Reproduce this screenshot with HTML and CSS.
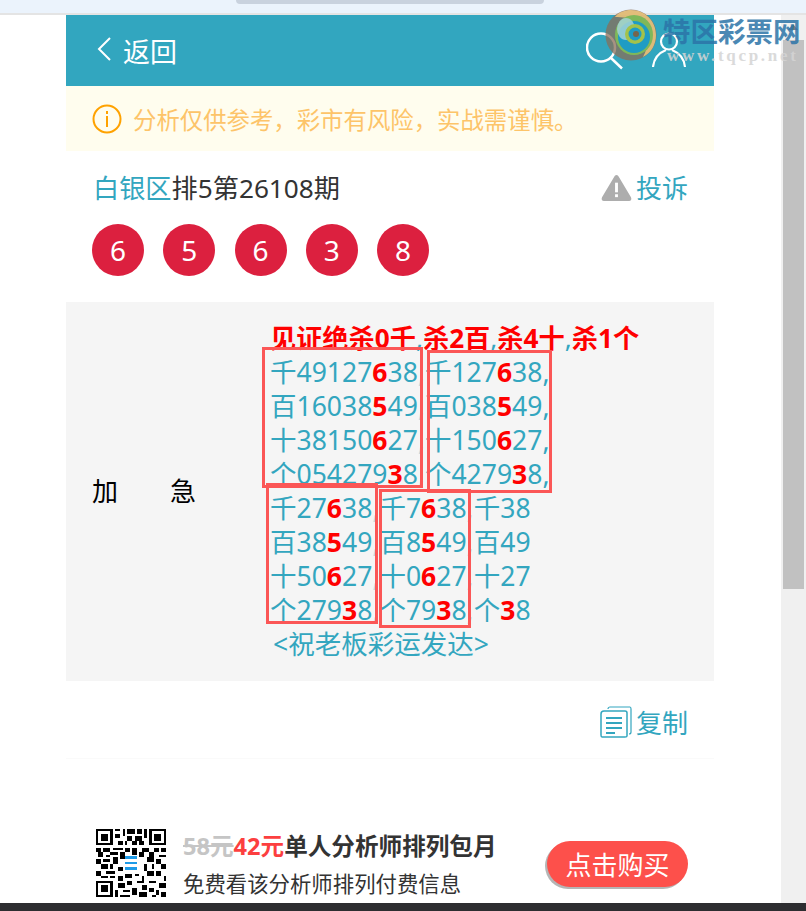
FILE: index.html
```html
<!DOCTYPE html>
<html>
<head>
  <meta charset="utf-8">
  <title>白银区排5第26108期</title>
  <link rel="stylesheet" href="styles.css">
</head>
<body>
  <div class="browser-top"><div class="tab-pill"></div></div>

  <div class="viewport">
    <div class="page">
      <div class="header">
        <a class="back">
          <svg class="back-icon" width="16" height="26" viewBox="0 0 16 26"><path d="M14 2 L3 13 L14 24" fill="none" stroke="#fff" stroke-width="2"/></svg>
          返回
        </a>
        <div class="header-icons">
          <svg width="38" height="38" viewBox="0 0 38 38"><circle cx="15" cy="15.500" r="14" fill="none" stroke="#fff" stroke-width="2.500"/><path d="M25 26 L36 36.500" stroke="#fff" stroke-width="2.500"/></svg>
          <svg width="36" height="38" viewBox="0 0 36 38"><circle cx="17" cy="9.500" r="8" fill="none" stroke="#fff" stroke-width="2.200"/><path d="M1 35 C2 25 9 20 14 18 M33 35 C32 25 25 20 20 18" fill="none" stroke="#fff" stroke-width="2.200"/></svg>
        </div>
      </div>

      <div class="notice">
        <svg width="30" height="30" viewBox="0 0 30 30"><circle cx="15" cy="15" r="13.500" fill="none" stroke="#ffa200" stroke-width="2"/><rect x="14" y="12" width="2" height="11" fill="#ffa200"/><rect x="14" y="7" width="2" height="3" fill="#ffa200"/></svg>
        <span>分析仅供参考，彩市有风险，实战需谨慎。</span>
      </div>

      <div class="title-row">
        <div class="title"><span class="teal">白银区</span>排5第26108期</div>
        <div class="complain">
          <svg width="31" height="27" viewBox="0 0 32 28"><path d="M16 1 C17 1 18 2 18.500 3 L31 24 C32 26 31 28 29 28 L3 28 C1 28 0 26 1 24 L13.500 3 C14 2 15 1 16 1 Z" fill="#adadad"/><rect x="14.500" y="9" width="3" height="10" fill="#fff"/><rect x="14.500" y="21" width="3" height="3" fill="#fff"/></svg>
          <span class="teal">投诉</span>
        </div>
      </div>

      <div class="balls">
        <span class="ball">6</span>
        <span class="ball">5</span>
        <span class="ball">6</span>
        <span class="ball">3</span>
        <span class="ball">8</span>
      </div>

      <div class="panel">
        <div class="panel-label">加<i></i>急</div>
        <div class="panel-body">
          <div class="headline">见证绝杀0千<em>,</em>杀2百<em>,</em>杀4十<em>,</em>杀1个</div>
          <div class="row">千49127<b>6</b>38<u>,</u>千127<b>6</b>38,</div>
          <div class="row">百16038<b>5</b>49<u>,</u>百038<b>5</b>49,</div>
          <div class="row">十38150<b>6</b>27<u>,</u>十150<b>6</b>27,</div>
          <div class="row">个054279<b>3</b>8<u>,</u>个4279<b>3</b>8,</div>
          <div class="row">千27<b>6</b>38<u>,</u>千7<b>6</b>38<u>,</u>千38</div>
          <div class="row">百38<b>5</b>49<u>,</u>百8<b>5</b>49<u>,</u>百49</div>
          <div class="row">十50<b>6</b>27<u>,</u>十0<b>6</b>27<u>,</u>十27</div>
          <div class="row">个279<b>3</b>8<u>,</u>个79<b>3</b>8<u>,</u>个<b>3</b>8</div>
          <div class="wish">&lt;祝老板彩运发达&gt;</div>
          <div class="mark mark-a"></div>
          <div class="mark mark-b"></div>
          <div class="mark mark-c"></div>
          <div class="mark mark-d"></div>
        </div>
      </div>

      <div class="copy-row">
        <svg width="32" height="32" viewBox="0 0 32 32"><path d="M8 3 C8 2 9 1 10 1 L30 1 C31 1 31 2 31 3 L31 26 C31 27 30 28 29 28" fill="none" stroke="#33a6bf" stroke-width="1.200"/><path d="M4 5 L25 5 C26 5 27 6 27 7 L27 30 C27 31 26 31 25 31 L2 31 C1 31 1 30 1 29 L1 8 C1 6 2 5 4 5 Z" fill="#fff" stroke="#33a6bf" stroke-width="1.500"/><path d="M6 12 H22 M6 17 H22 M6 22 H22 M6 27 H15" stroke="#33a6bf" stroke-width="2"/></svg>
        <span class="teal">复制</span>
      </div>

      <div class="buy-row">
        <svg class="qr" width="70" height="68" viewBox="0 0 29 29" preserveAspectRatio="none" shape-rendering="crispEdges"><path fill="#000" d="M0 0h7v7H0z M22 0h7v7h-7z M0 22h7v7H0z"/><path fill="#fff" d="M1 1h5v5H1z M23 1h5v5h-5z M1 23h5v5H1z"/><path fill="#000" d="M2 2h3v3H2z M24 2h3v3h-3z M2 24h3v3H2z M8 0h2v1H8z M11 0h1v3h-1z M13 0h3v2h-3z M17 0h2v2h-2z M20 0h1v4h-1z M8 2h2v2H8z M13 3h2v2h-2z M16 3h3v2h-3z M9 5h2v2H9z M12 5h1v2h-1z M15 5h2v2h-2z M18 5h2v2h-2z M0 8h2v2H0z M3 8h3v2H3z M7 8h4v1H7z M12 8h2v2h-2z M15 8h2v3h-2z M19 8h3v2h-3z M24 8h2v2h-2z M27 8h2v2h-2z M1 10h2v2H1z M4 11h2v1H4z M6 10h3v1H6z M10 10h2v3h-2z M18 10h2v2h-2z M22 10h2v2h-2z M26 11h3v1h-3z M0 13h2v2H0z M3 13h3v1H3z M7 12h2v3H7z M21 12h3v2h-3z M25 13h2v2h-2z M2 15h3v2H2z M6 15h1v2H6z M9 16h2v2H9z M20 15h1v3h-1z M23 15h1v2h-1z M27 15h2v2h-2z M0 18h2v2H0z M4 18h4v1H4z M12 19h3v2h-3z M16 19h2v1h-2z M21 18h3v2h-3z M25 18h2v2h-2z M2 20h3v1H2z M6 20h2v1H6z M9 20h2v2H9z M19 20h1v2h-1z M28 20h1v2h-1z M9 23h3v2H9z M13 22h2v2h-2z M17 22h3v1h-3z M22 22h3v1h-3z M26 23h3v2h-3z M8 26h1v3H8z M11 26h3v1h-3z M15 25h2v3h-2z M19 24h2v2h-2z M22 25h2v2h-2z M25 26h1v2h-1z M10 28h4v1h-4z M18 27h3v2h-3z M23 28h2v1h-2z M27 27h2v2h-2z"/><path fill="#fff" d="M12 11h5v7h-5z"/><path fill="#1e9be8" d="M12 11.500h5v1.500h-5z M12 14h5v1h-5z M12 16h5v1.500h-5z"/></svg>
        <div class="buy-text">
          <div class="buy-title"><s>58元</s><span class="price">42元</span>单人分析师排列包月</div>
          <div class="buy-sub">免费看该分析师排列付费信息</div>
        </div>
        <a class="buy-btn">点击购买</a>
      </div>
    </div>

    <div class="scrollbar"><div class="arrow"></div><div class="thumb"></div></div>
  </div>

  <div class="watermark">
    <svg width="52" height="52" viewBox="0 0 52 52">
      <ellipse cx="26" cy="26" rx="25.500" ry="25.500" fill="#8a6e58" fill-opacity=".75"/>
      <path d="M26 1 C40 1 51 12 51 26 C51 36 46 44 38 48 C44 38 44 24 36 16 C28 8 16 8 10 8 C14 3 20 1 26 1 Z" fill="#e9c27a" fill-opacity=".9"/>
      <ellipse cx="29" cy="26" rx="19" ry="20" fill="#7fb85a"/>
      <ellipse cx="29" cy="28" rx="16" ry="16" fill="#1f9cc4"/>
      <ellipse cx="21" cy="20" rx="9" ry="11" fill="#a5d3d6" fill-opacity=".85"/>
      <circle cx="30" cy="25" r="10" fill="#a4c24a"/>
      <circle cx="30" cy="25" r="6.500" fill="#1f9cc4"/>
      <circle cx="31" cy="25" r="3" fill="#76654c"/>
    </svg>
    <div class="wm-text">
      <div class="wm-name">特区彩票网</div>
      <div class="wm-url">www.tqcp.net</div>
    </div>
  </div>

  <div class="taskbar"></div>
</body>
</html>
```

FILE: styles.css
```css
* {
  box-sizing: border-box;
}

html, body {
  margin: 0;
  height: 911px;
  overflow: hidden;
}

body {
  position: relative;
  display: flex;
  flex-direction: column;
  background-color: #fff;
  font-family: "Noto Sans", "Noto Sans CJK SC", sans-serif;
  color: #333;
}

.teal {
  color: #33a6bf;
}

.browser-top {
  height: 15px;
  flex: none;
  display: flex;
  justify-content: center;
  background-color: #ebf3fc;
  border-bottom: 2px solid #e4e4e4;
}

.tab-pill {
  width: 308px;
  height: 4px;
  margin-right: 27px;
  border-radius: 0 0 6px 6px;
  background-color: #c9d2de;
}

.viewport {
  flex: 1;
  display: flex;
  min-height: 0;
}

.page {
  width: 648px;
  margin-left: 66px;
  margin-right: 67px;
  flex: none;
}

.header {
  height: 71px;
  padding: 0 26px 0 30px;
  display: flex;
  align-items: center;
  justify-content: space-between;
  background-color: #32a6bf;
}

.back {
  display: flex;
  align-items: center;
  gap: 11px;
  font-size: 27px;
  color: #fff;
}

.back-icon {
  margin-bottom: 4px;
}

.header-icons {
  display: flex;
  gap: 28px;
}

.notice {
  height: 65px;
  padding-left: 26px;
  display: flex;
  align-items: center;
  gap: 11px;
  background-color: #fffdee;
  font-size: 23.400px;
  color: #fdc469;
}

.title-row {
  height: 72px;
  padding: 0 26px 0 27px;
  display: flex;
  align-items: center;
  justify-content: space-between;
  font-size: 26.200px;
}

.complain {
  display: flex;
  align-items: center;
  gap: 4px;
  font-size: 26px;
}

.balls {
  display: flex;
  gap: 19.250px;
  padding-left: 26px;
  padding-top: 1px;
}

.ball {
  width: 52px;
  height: 52px;
  border-radius: 50%;
  display: flex;
  align-items: center;
  justify-content: center;
  background-color: #dc203f;
  color: #fff;
  font-size: 28px;
}

.panel {
  margin-top: 26px;
  height: 379px;
  display: flex;
  background-color: #f5f5f5;
}

.panel-label {
  width: 204px;
  padding-left: 26px;
  padding-top: 169px;
  font-size: 26px;
  color: #000;
}

.panel-label i {
  display: inline-block;
  width: 52px;
}

.panel-body {
  position: relative;
  padding-top: 19px;
  font-size: 26.500px;
  color: #33a6bf;
}

.headline {
  height: 34px;
  line-height: 34px;
  font-size: 26.200px;
  font-weight: bold;
  color: #f00;
  white-space: nowrap;
}

.headline em {
  font-style: normal;
  font-weight: normal;
  color: #33a6bf;
}

.row {
  height: 34px;
  line-height: 34px;
  white-space: nowrap;
}

.row b {
  color: #f00;
}

/* commas that end up under the hand drawn boxes */
.row u {
  text-decoration: none;
  color: #c4d6da;
}

.wish {
  height: 34px;
  line-height: 34px;
  padding-left: 3px;
  white-space: nowrap;
}

.mark {
  position: absolute;
  border: 3px solid #fb5656;
}

.mark-a {
  left: -8px;
  top: 45px;
  width: 161px;
  height: 141px;
}

.mark-b {
  left: 157px;
  top: 48px;
  width: 125px;
  height: 143px;
}

.mark-c {
  left: -4px;
  top: 181px;
  width: 112px;
  height: 141px;
}

.mark-d {
  left: 109px;
  top: 187px;
  width: 92px;
  height: 139px;
}

.copy-row {
  height: 78px;
  padding-right: 26px;
  padding-top: 4px;
  display: flex;
  align-items: center;
  justify-content: flex-end;
  gap: 4px;
  font-size: 26px;
  border-bottom: 1px solid #fafafa;
}

.buy-row {
  margin-top: 70px;
  padding-left: 30px;
  padding-right: 26px;
  display: flex;
  align-items: flex-start;
}

.qr {
  flex: none;
}

.buy-text {
  margin-left: 17px;
  flex: 1;
}

.buy-title {
  font-size: 23.600px;
  line-height: 32px;
  font-weight: bold;
  margin-top: 1px;
  white-space: nowrap;
}

.buy-title s {
  color: #c5c5c5;
}

.price {
  color: #fc3f3f;
}

.buy-sub {
  margin-top: 8px;
  font-size: 21.400px;
  line-height: 28px;
  white-space: nowrap;
}

.buy-btn {
  width: 141px;
  height: 46px;
  margin-top: 12px;
  flex: none;
  border-radius: 23px;
  display: flex;
  align-items: center;
  justify-content: center;
  background-color: #fd504b;
  box-shadow: -2px 2px 0 #b5b5b5;
  color: #fff;
  font-size: 26px;
}

.scrollbar {
  width: 25px;
  flex: none;
  background-color: #f0f0f0;
}

.arrow {
  width: 0;
  height: 0;
  margin: 9px 0 0 7px;
  border-left: 5px solid transparent;
  border-right: 5px solid transparent;
  border-bottom: 6px solid #7a7a7a;
}

.thumb {
  width: 21px;
  height: 549px;
  margin: 10px 0 0 2px;
  background-color: #c1c1c1;
}

.taskbar {
  position: absolute;
  left: 0;
  right: 0;
  bottom: 0;
  height: 8px;
  background-color: #2d2d30;
}

/* site watermark sits over the screenshot */
.watermark {
  position: absolute;
  left: 605px;
  top: 9px;
  display: flex;
  gap: 6px;
}

.wm-text {
  padding-top: 8px;
  opacity: .85;
}

.wm-name {
  font-size: 27.500px;
  line-height: 30px;
  font-weight: bold;
  color: #2c74a8;
  white-space: nowrap;
}

.wm-url {
  margin-left: 4px;
  font-family: "Liberation Serif", serif;
  font-size: 17px;
  line-height: 18px;
  font-weight: bold;
  letter-spacing: 2.700px;
  color: #d4d4d4;
  white-space: nowrap;
}
```
